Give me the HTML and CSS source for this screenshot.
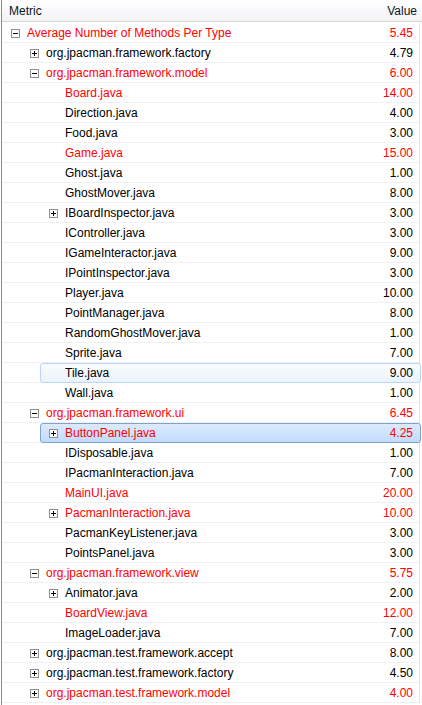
FILE: index.html
```html
<!DOCTYPE html>
<html>
<head>
<meta charset="utf-8">
<link rel="stylesheet" href="styles.css">
</head>
<body>
<div class="table">
  <div class="header">
    <div class="h-metric">Metric</div>
    <div class="h-value">Value</div>
  </div>
  <div class="rows">
    <div class="row lvl0 red"><span class="tog minus"></span><span class="name">Average Number of Methods Per Type</span><span class="val">5.45</span></div>
    <div class="row lvl1"><span class="tog plus"></span><span class="name">org.jpacman.framework.factory</span><span class="val">4.79</span></div>
    <div class="row lvl1 red"><span class="tog minus"></span><span class="name">org.jpacman.framework.model</span><span class="val">6.00</span></div>
    <div class="row lvl2 red"><span class="tog none"></span><span class="name">Board.java</span><span class="val">14.00</span></div>
    <div class="row lvl2"><span class="tog none"></span><span class="name">Direction.java</span><span class="val">4.00</span></div>
    <div class="row lvl2"><span class="tog none"></span><span class="name">Food.java</span><span class="val">3.00</span></div>
    <div class="row lvl2 red"><span class="tog none"></span><span class="name">Game.java</span><span class="val">15.00</span></div>
    <div class="row lvl2"><span class="tog none"></span><span class="name">Ghost.java</span><span class="val">1.00</span></div>
    <div class="row lvl2"><span class="tog none"></span><span class="name">GhostMover.java</span><span class="val">8.00</span></div>
    <div class="row lvl2"><span class="tog plus"></span><span class="name">IBoardInspector.java</span><span class="val">3.00</span></div>
    <div class="row lvl2"><span class="tog none"></span><span class="name">IController.java</span><span class="val">3.00</span></div>
    <div class="row lvl2"><span class="tog none"></span><span class="name">IGameInteractor.java</span><span class="val">9.00</span></div>
    <div class="row lvl2"><span class="tog none"></span><span class="name">IPointInspector.java</span><span class="val">3.00</span></div>
    <div class="row lvl2"><span class="tog none"></span><span class="name">Player.java</span><span class="val">10.00</span></div>
    <div class="row lvl2"><span class="tog none"></span><span class="name">PointManager.java</span><span class="val">8.00</span></div>
    <div class="row lvl2"><span class="tog none"></span><span class="name">RandomGhostMover.java</span><span class="val">1.00</span></div>
    <div class="row lvl2"><span class="tog none"></span><span class="name">Sprite.java</span><span class="val">7.00</span></div>
    <div class="row lvl2 hover"><span class="tog none"></span><span class="name">Tile.java</span><span class="val">9.00</span></div>
    <div class="row lvl2"><span class="tog none"></span><span class="name">Wall.java</span><span class="val">1.00</span></div>
    <div class="row lvl1 red"><span class="tog minus"></span><span class="name">org.jpacman.framework.ui</span><span class="val">6.45</span></div>
    <div class="row lvl2 red selected"><span class="tog plus"></span><span class="name">ButtonPanel.java</span><span class="val">4.25</span></div>
    <div class="row lvl2"><span class="tog none"></span><span class="name">IDisposable.java</span><span class="val">1.00</span></div>
    <div class="row lvl2"><span class="tog none"></span><span class="name">IPacmanInteraction.java</span><span class="val">7.00</span></div>
    <div class="row lvl2 red"><span class="tog none"></span><span class="name">MainUI.java</span><span class="val">20.00</span></div>
    <div class="row lvl2 red"><span class="tog plus"></span><span class="name">PacmanInteraction.java</span><span class="val">10.00</span></div>
    <div class="row lvl2"><span class="tog none"></span><span class="name">PacmanKeyListener.java</span><span class="val">3.00</span></div>
    <div class="row lvl2"><span class="tog none"></span><span class="name">PointsPanel.java</span><span class="val">3.00</span></div>
    <div class="row lvl1 red"><span class="tog minus"></span><span class="name">org.jpacman.framework.view</span><span class="val">5.75</span></div>
    <div class="row lvl2"><span class="tog plus"></span><span class="name">Animator.java</span><span class="val">2.00</span></div>
    <div class="row lvl2 red"><span class="tog none"></span><span class="name">BoardView.java</span><span class="val">12.00</span></div>
    <div class="row lvl2"><span class="tog none"></span><span class="name">ImageLoader.java</span><span class="val">7.00</span></div>
    <div class="row lvl1"><span class="tog plus"></span><span class="name">org.jpacman.test.framework.accept</span><span class="val">8.00</span></div>
    <div class="row lvl1"><span class="tog plus"></span><span class="name">org.jpacman.test.framework.factory</span><span class="val">4.50</span></div>
    <div class="row lvl1 red"><span class="tog plus"></span><span class="name">org.jpacman.test.framework.model</span><span class="val">4.00</span></div>
  </div>
</div>
</body>
</html>
```

FILE: styles.css
```css
html, body {
  margin: 0;
  padding: 0;
  background: #ffffff;
}

body {
  font-family: "Liberation Sans", Arial, sans-serif;
  font-size: 12px;
  color: #000000;
  width: 422px;
  height: 705px;
  overflow: hidden;
}

.table {
  margin-left: 1px;
  width: 421px;
  height: 705px;
  border-left: 1px solid #8a8d92;
  box-sizing: border-box;
}

.header {
  display: flex;
  justify-content: space-between;
  height: 22px;
  box-sizing: border-box;
  border-bottom: 1px solid #d5d5d5;
  background: linear-gradient(#ffffff, #f2f3f5);
  padding: 2px 5px 0 7px;
  line-height: 19px;
  color: #0c1424;
  margin-bottom: 1px;
}

.rows {
  border-right: 1px solid #dde3e9;
  width: 417px;
}

.row {
  position: relative;
  display: flex;
  align-items: center;
  height: 20px;
  box-sizing: border-box;
  border-bottom: 1px solid #f0f0f0;
}

.row.red {
  color: #ff0000;
}

.tog {
  width: 9px;
  height: 9px;
  box-sizing: border-box;
  flex: none;
  position: relative;
  margin: 2px 7px 0 0;
}

.tog.plus, .tog.minus {
  border: 1px solid #8f8f8f;
  background: #ffffff;
}

.tog.plus::before, .tog.minus::before {
  content: "";
  position: absolute;
  left: 1px;
  top: 3px;
  width: 5px;
  height: 1px;
  background: #000000;
}

.tog.plus::after {
  content: "";
  position: absolute;
  left: 3px;
  top: 1px;
  width: 1px;
  height: 5px;
  background: #000000;
}

.lvl0 { padding-left: 9px; }
.lvl1 { padding-left: 28px; }
.lvl2 { padding-left: 47px; }

.name, .val {
  position: relative;
  padding-top: 2px;
  line-height: 17px;
  white-space: nowrap;
}

.name {
  flex: 1;
}

.val {
  flex: none;
  padding-right: 6px;
}

.row.hover::before,
.row.selected::before {
  content: "";
  position: absolute;
  left: 38px;
  right: -2px;
  top: 0;
  bottom: -1px;
  border-radius: 3px;
  box-sizing: border-box;
}

.row.hover::before {
  border: 1px solid #b8d6fb;
  background: linear-gradient(#fafbfd, #ebf3fd);
}

.row.selected::before {
  border: 1px solid #7da2ce;
  background: linear-gradient(#dcebfc, #c1dbfc);
}
```
